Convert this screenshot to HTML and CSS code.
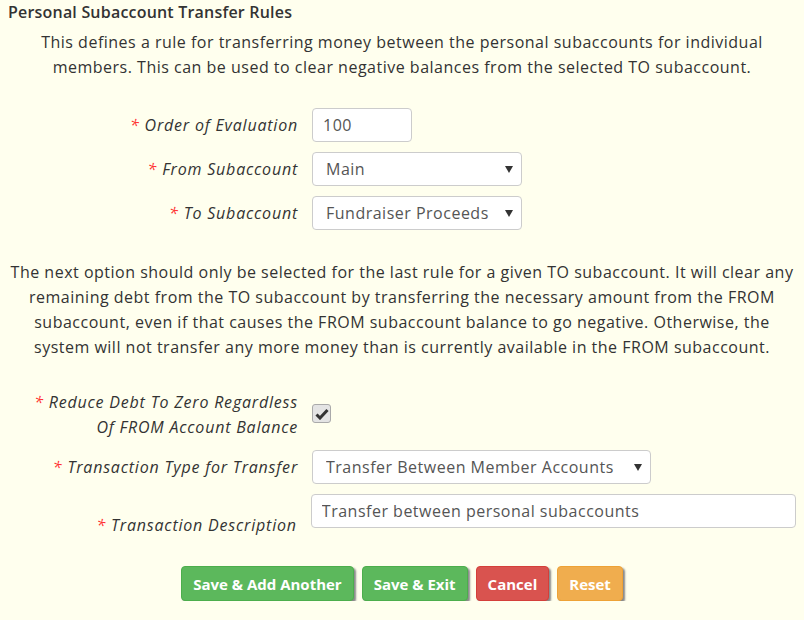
FILE: index.html
```html
<!DOCTYPE html>
<html>
<head>
  <title>Personal Subaccount Transfer Rules</title>
  <link rel="stylesheet" href="styles.css">
</head>
<body>
  <div class="page">
    <h4 class="title">Personal Subaccount Transfer Rules</h4>
    <p class="intro">This defines a rule for transferring money between the personal subaccounts for individual members. This can be used to clear negative balances from the selected TO subaccount.</p>

    <form class="rule-form">
      <div class="form-row">
        <label class="row-label" for="order"><span class="req">*</span> Order of Evaluation</label>
        <input class="field field-short" id="order" type="text" value="100">
      </div>
      <div class="form-row">
        <label class="row-label" for="from_sub"><span class="req">*</span> From Subaccount</label>
        <div class="select-wrap select-mid">
          <select class="field" id="from_sub">
            <option>Main</option>
          </select>
        </div>
      </div>
      <div class="form-row">
        <label class="row-label" for="to_sub"><span class="req">*</span> To Subaccount</label>
        <div class="select-wrap select-mid">
          <select class="field" id="to_sub">
            <option>Fundraiser Proceeds</option>
          </select>
        </div>
      </div>

      <p class="note">The next option should only be selected for the last rule for a given TO subaccount. It will clear any remaining debt from the TO subaccount by transferring the necessary amount from the FROM subaccount, even if that causes the FROM subaccount balance to go negative. Otherwise, the system will not transfer any more money than is currently available in the FROM subaccount.</p>

      <div class="form-row form-row-check">
        <label class="row-label" for="reduce"><span class="req">*</span> Reduce Debt To Zero Regardless<br>Of FROM Account Balance</label>
        <span class="check-box" id="reduce">
          <svg width="14" height="12" viewBox="0 0 14 12"><path d="M1.5 6.5 L5 10 L12.5 2" fill="none" stroke="#333" stroke-width="3"/></svg>
        </span>
      </div>
      <div class="form-row">
        <label class="row-label" for="tx_type"><span class="req">*</span> Transaction Type for Transfer</label>
        <div class="select-wrap select-wide">
          <select class="field" id="tx_type">
            <option>Transfer Between Member Accounts</option>
          </select>
        </div>
      </div>
      <div class="form-row form-row-desc">
        <label class="row-label" for="tx_desc"><span class="req">*</span> Transaction Description</label>
        <input class="field field-long" id="tx_desc" type="text" value="Transfer between personal subaccounts">
      </div>

      <div class="actions">
        <button type="button" class="btn btn-save">Save &amp; Add Another</button>
        <button type="button" class="btn btn-save">Save &amp; Exit</button>
        <button type="button" class="btn btn-cancel">Cancel</button>
        <button type="button" class="btn btn-reset">Reset</button>
      </div>
    </form>
  </div>
</body>
</html>
```

FILE: styles.css
```css
body {
  margin: 0;
  background-color: #ffffee;
  color: #333;
  font-family: "Open Sans", Arial, sans-serif;
  font-size: 16px;
  letter-spacing: 0.5px;
}
.page {
  padding: 0 8px;
}
.title {
  margin: 0;
  padding-top: 2px;
  font-size: 16px;
  font-weight: 600;
  line-height: 20px;
  letter-spacing: 0.2px;
}
.intro {
  margin: 8px 20px 0;
  text-align: center;
  line-height: 25px;
}
.rule-form {
  margin-top: 28px;
}
.form-row {
  display: flex;
  align-items: center;
  margin-bottom: 10px;
}
.row-label {
  width: 290px;
  margin-right: 14px;
  text-align: right;
  font-style: italic;
  line-height: 25px;
  letter-spacing: 0.8px;
}
.req {
  color: #f33;
}
.field {
  height: 34px;
  box-sizing: border-box;
  padding: 0 10px;
  border: 1px solid #ccc;
  border-radius: 4px;
  background: #fff;
  color: #555;
  font-family: inherit;
  font-size: 16px;
  letter-spacing: 0.5px;
}
.field-short {
  width: 100px;
}
.field-long {
  width: 487px;
}
.select-wrap {
  position: relative;
}
.select-wrap select {
  width: 100%;
  padding-left: 13px;
  appearance: none;
  -webkit-appearance: none;
}
.select-wrap::after {
  content: "";
  position: absolute;
  right: 9px;
  top: 14px;
  border-left: 4px solid transparent;
  border-right: 4px solid transparent;
  border-top: 7px solid #333;
  pointer-events: none;
}
.select-mid {
  width: 210px;
}
.select-wide {
  width: 339px;
}
.note {
  margin: 30px 0 30px;
  text-align: center;
  line-height: 25px;
}
.form-row-check {
  align-items: flex-start;
}
.check-box {
  display: flex;
  align-items: center;
  justify-content: center;
  width: 17px;
  height: 17px;
  margin-top: 14px;
  border: 1px solid #aaa;
  border-radius: 3px;
  background: #e4e4e4;
}
.form-row-desc {
  align-items: flex-start;
}
.form-row-desc .row-label {
  padding-top: 19px;
}
.actions {
  display: flex;
  justify-content: center;
  gap: 8px;
  margin-top: 28px;
}
.btn {
  height: 35px;
  padding: 0 11px;
  border: 1px solid transparent;
  border-radius: 4px;
  color: #fff;
  font-family: inherit;
  font-size: 15px;
  font-weight: 700;
  letter-spacing: 0;
  box-shadow: 2px 2px 2px #888;
  cursor: pointer;
}
.btn-save {
  background-color: #5cb85c;
  border-color: #4cae4c;
}
.btn-cancel {
  background-color: #d9534f;
  border-color: #d43f3a;
}
.btn-reset {
  background-color: #f0ad4e;
  border-color: #eea236;
}
```
